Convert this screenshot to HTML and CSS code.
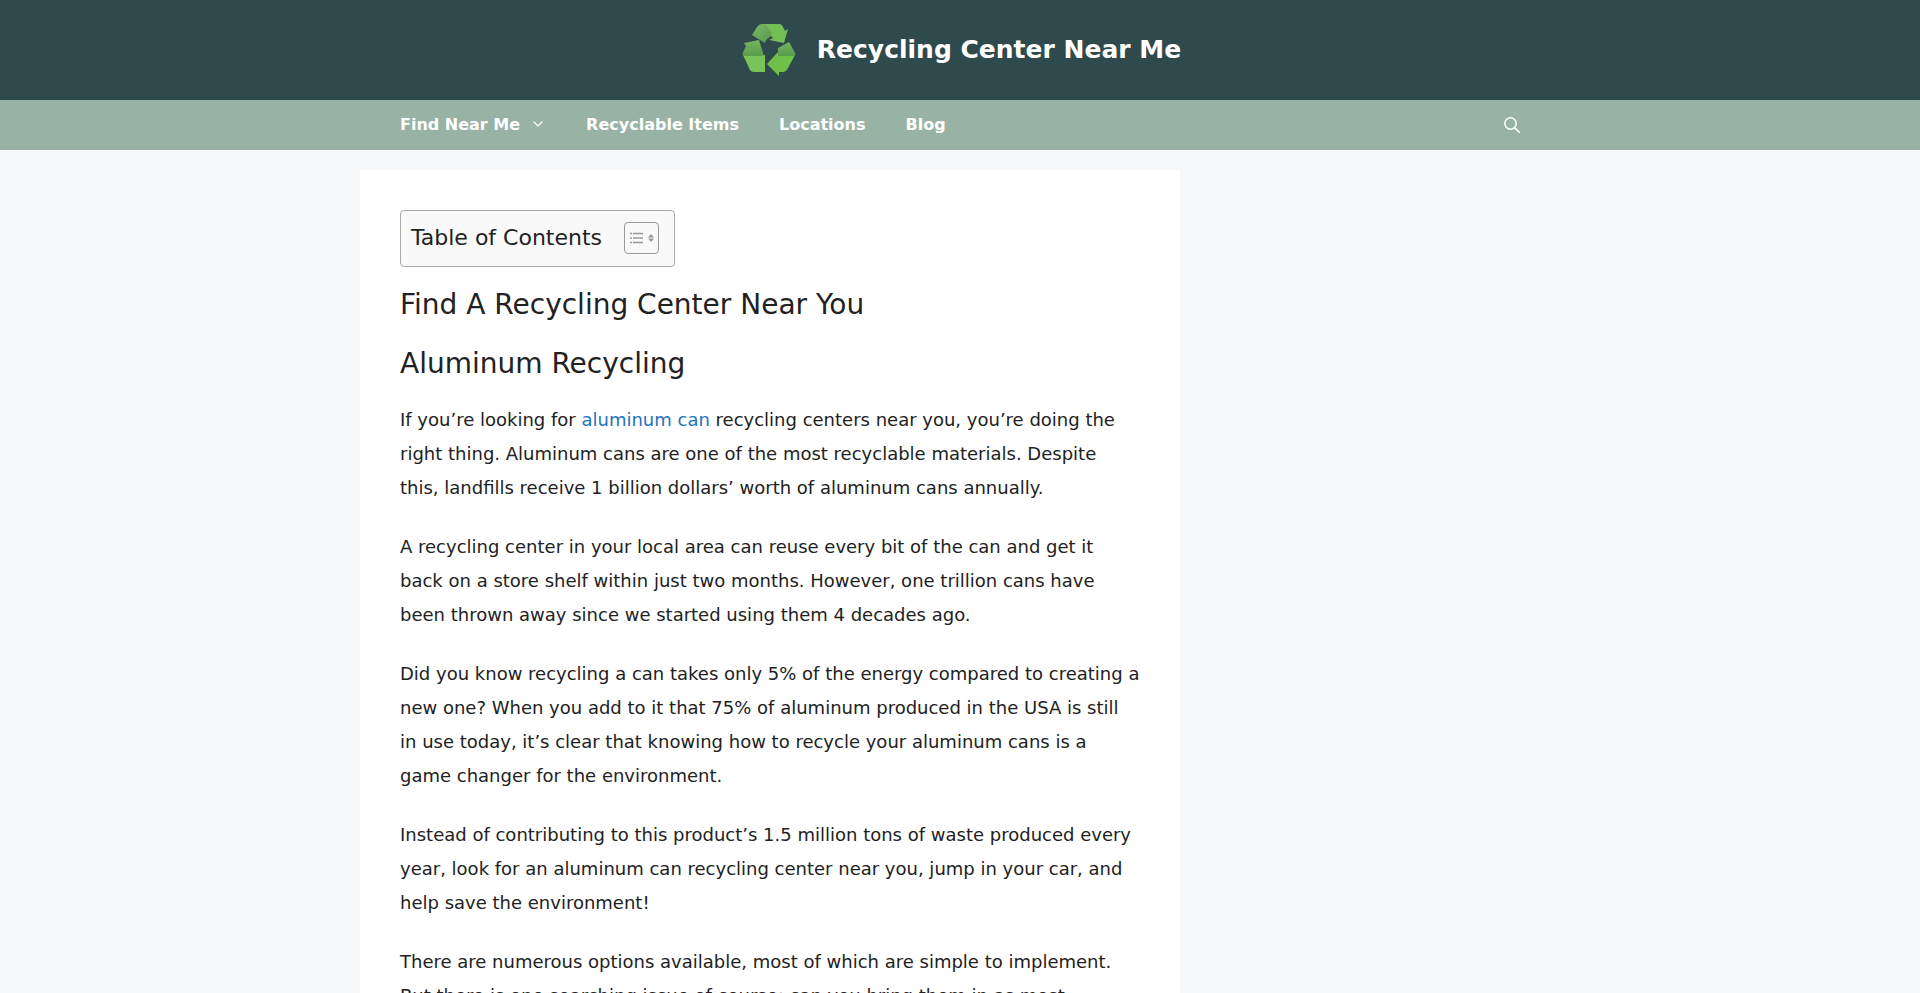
FILE: index.html
```
<!DOCTYPE html>
<html lang="en">
<head>
    <meta charset="UTF-8">
    <meta name="viewport" content="width=device-width, initial-scale=1.0">
    <title>Recycling Center Near Me</title>
    <link rel="stylesheet" href="styles.css">
</head>
<body>
    <header class="site-header">
        <a class="site-logo" href="#" aria-label="Home">
            <svg width="60" height="60" viewBox="-1 0 60 60">
                <defs>
                    <linearGradient id="fold-top" x1="0" y1="0" x2="1" y2="1">
                        <stop offset="0" stop-color="#7cb96a"/>
                        <stop offset="1" stop-color="#57964a"/>
                    </linearGradient>
                    <linearGradient id="fold-side" x1="0" y1="0" x2="0" y2="1">
                        <stop offset="0" stop-color="#75b561"/>
                        <stop offset="1" stop-color="#5a9b4a"/>
                    </linearGradient>
                </defs>
                <!-- top arrow -->
                <path fill="#74bf55" d="M22 4h17q3 0 4 3l2 4 3-2-4 14-15-3 4-2-6-6z"/>
                <path fill="url(#fold-top)" d="M22 4q-3 0-5 3l-5 8 13 8 2-4 3-2 2-4-5-7q-1-2-3-2z"/>
                <!-- left arrow -->
                <path fill="#79c45a" d="M3 35h22v17H14q-3 0-4-2z"/>
                <path fill="url(#fold-side)" d="M4 23l15-3 5 16-5-1 3-3 2 4H3q-1-3 1-6l2-4z"/>
                <!-- right arrow -->
                <path fill="#6fc04b" d="M55 35l-7 13q-2 4-5 4h-4v4L27 44l11-12v4z"/>
                <path fill="url(#fold-side)" d="M38 28l11-6 5 9q2 3 1 5H38z"/>
            </svg>
        </a>
        <a class="site-title" href="#">Recycling Center Near Me</a>
    </header>

    <nav class="main-nav">
        <div class="nav-inner">
            <a class="nav-link" href="#">Find Near Me
                <svg width="14" height="8" viewBox="0 0 14 8"><path d="M2 1l4 4 4-4" fill="none" stroke="currentColor" stroke-width="1.2" stroke-linecap="round"/></svg>
            </a>
            <a class="nav-link" href="#">Recyclable Items</a>
            <a class="nav-link" href="#">Locations</a>
            <a class="nav-link" href="#">Blog</a>
            <button class="nav-search" aria-label="Open search">
                <svg width="16" height="16" viewBox="0 0 16 16">
                    <circle cx="6.5" cy="6.5" r="5.7" fill="none" stroke="currentColor" stroke-width="1.5"/>
                    <path d="M10.6 10.6L15.2 15.2" stroke="currentColor" stroke-width="1.6" stroke-linecap="round"/>
                </svg>
            </button>
        </div>
    </nav>

    <div class="container">
        <main class="content">
            <div class="toc">
                <span class="toc-title">Table of Contents</span>
                <button class="toc-toggle" aria-label="Toggle table of contents">
                    <svg width="25" height="14" viewBox="0 0 25 14">
                        <path d="M1 2.5h2M1 7h2M1 11.5h2M4 2.5h10M4 7h10M4 11.5h10" stroke="#999" stroke-width="1.5"/>
                        <path d="M22 3l3 3.5h-6zM22 11l3-3.500h-6z" fill="#999"/>
                    </svg>
                </button>
            </div>

            <h2>Find A Recycling Center Near You</h2>
            <h2>Aluminum Recycling</h2>

            <p>If you’re looking for <a href="#">aluminum can</a> recycling centers near you, you’re doing the right thing. Aluminum cans are one of the most recyclable materials. Despite this, landfills receive 1 billion dollars’ worth of aluminum cans annually.</p>
            <p>A recycling center in your local area can reuse every bit of the can and get it back on a store shelf within just two months. However, one trillion cans have been thrown away since we started using them 4 decades ago.</p>
            <p>Did you know recycling a can takes only 5% of the energy compared to creating a new one? When you add to it that 75% of aluminum produced in the USA is still in use today, it’s clear that knowing how to recycle your aluminum cans is a game changer for the environment.</p>
            <p>Instead of contributing to this product’s 1.5 million tons of waste produced every year, look for an aluminum can recycling center near you, jump in your car, and help save the environment!</p>
            <p>There are numerous options available, most of which are simple to implement. But there is one searching issue of course: can you bring them in as most</p>
        </main>
    </div>
</body>
</html>
```
FILE: styles.css
```
body {
    margin: 0;
    background-color: #f7f8f9;
    color: #222;
    font-family: "DejaVu Sans", sans-serif;
    font-size: 18px;
    line-height: 34px;
}
a {
    color: #1e73be;
    text-decoration: none;
}
button {
    padding: 0;
    background: none;
    border: none;
    cursor: pointer;
}
svg {
    display: block;
}

.site-header {
    display: flex;
    justify-content: center;
    align-items: center;
    gap: 18px;
    padding: 20px;
    background-color: #2f4a4d;
}
.site-title {
    color: #fff;
    font-size: 25px;
    font-weight: bold;
}

.main-nav {
    background-color: #98b3a5;
}
.nav-inner {
    display: flex;
    max-width: 1200px;
    margin: 0 auto;
    padding: 0 20px;
    box-sizing: border-box;
}
.nav-link {
    display: flex;
    align-items: center;
    gap: 12px;
    padding: 0 20px;
    color: #fff;
    font-size: 16px;
    font-weight: bold;
    line-height: 50px;
}
.nav-search {
    margin-left: auto;
    padding: 0 20px;
    color: #fff;
}

.container {
    max-width: 1200px;
    margin: 20px auto;
}
.content {
    max-width: 820px;
    padding: 40px;
    box-sizing: border-box;
    background-color: #fff;
}
.content h2 {
    margin: 0 0 20px;
    font-size: 28px;
    font-weight: normal;
    line-height: 39px;
}
.content p {
    margin: 0 0 25px;
}

.toc {
    display: flex;
    align-items: center;
    justify-content: space-between;
    width: 275px;
    margin-bottom: 18px;
    padding: 10px 15px 11px 10px;
    box-sizing: border-box;
    background-color: #f9f9f9;
    border: 1px solid #aaa;
    border-radius: 4px;
}
.toc-title {
    font-size: 22px;
}
.toc-toggle {
    padding: 8px 4px;
    border: 1px solid #999;
    border-radius: 4px;
}
```
